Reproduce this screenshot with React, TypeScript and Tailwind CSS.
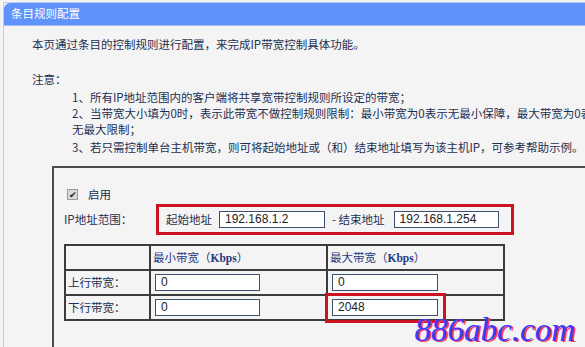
import React from "react";

const cjk = { fontFamily: '"SimSun", "Noto Sans CJK SC", sans-serif' };

const Field = ({ value, className }: { value: string; className?: string }) => (
    <div
        className={`h-[17px] border border-[#3f4f6e] bg-white pl-[5px] text-[12px] leading-[15px] text-[#222] ${className ?? ""}`}
        style={{ fontFamily: '"Liberation Sans", Arial, sans-serif' }}
    >
        {value}
    </div>
);

const App = () => {
    return (
        <div className="relative h-[347px] w-[585px] overflow-hidden bg-[#f4f4f4] pl-[3px] pt-[2px]" style={cjk}>
            <div className="h-full border-l border-t border-l-[#e6c98d] border-t-[#b3cdf3]">
                {/* title bar */}
                <div className="flex h-[23px] items-center rounded-tl-[6px] border-b border-b-[#a6bfe9] bg-[#5f93fb] pl-[7px] text-[11.5px] text-white">
                    条目规则配置
                </div>

                <div className="pl-[28px] pt-[10px] text-[11.5px] leading-[16px] text-[#1e2f52]">
                    <p>本页通过条目的控制规则进行配置，来完成IP带宽控制具体功能。</p>
                    <p className="mt-[19px]">注意：</p>
                    <div className="mt-[2px] pl-[40px] whitespace-nowrap">
                        <p>1、所有IP地址范围内的客户端将共享宽带控制规则所设定的带宽；</p>
                        <p>2、当带宽大小填为0时，表示此带宽不做控制规则限制：最小带宽为0表示无最小保障，最大带宽为0表示</p>
                        <p>无最大限制；</p>
                        <p className="mt-[2px]">3、若只需控制单台主机带宽，则可将起始地址或（和）结束地址填写为该主机IP，可参考帮助示例。</p>
                    </div>
                </div>

                {/* rule box */}
                <div className="ml-[48px] mt-[11px] h-[200px] border-l-2 border-t-2 border-[#4a4a4a] pl-[10px] pt-[18px] text-[11.5px] text-[#1e2f52]">
                    <div className="flex items-center gap-[10px] pl-[3px]">
                        <span className="flex h-[11px] w-[11px] items-center justify-center border border-[#9a9a9a] bg-[#d9d9d9] text-[9px] leading-none text-[#222]">
                            ✔
                        </span>
                        <span>启用</span>
                    </div>

                    <div className="mt-[1px] flex items-center">
                        <span className="w-[92px]">IP地址范围：</span>
                        <div className="flex h-[31px] w-[358px] items-center border-[3px] border-[#cc1420] pl-[7px]">
                            <span>起始地址</span>
                            <Field value="192.168.1.2" className="ml-[7px] w-[106px]" />
                            <span className="ml-[7px]">- 结束地址</span>
                            <Field value="192.168.1.254" className="ml-[9px] w-[105px]" />
                        </div>
                    </div>

                    <table className="mt-[9px] border-collapse text-[11.5px]">
                        <tbody>
                            <tr className="h-[25px]">
                                <td className="w-[85px] border-2 border-[#3c3c3c]" />
                                <td className="w-[177px] border-2 border-[#3c3c3c] pl-[2px] text-[#1f3a80]">
                                    最小带宽（<span className="font-bold" style={{ fontFamily: '"Liberation Serif", serif' }}>Kbps</span>）
                                </td>
                                <td className="w-[177px] border-2 border-[#3c3c3c] pl-[2px] text-[#1f3a80]">
                                    最大带宽（<span className="font-bold" style={{ fontFamily: '"Liberation Serif", serif' }}>Kbps</span>）
                                </td>
                            </tr>
                            <tr className="h-[25px]">
                                <td className="border-2 border-[#3c3c3c] pl-[2px]">上行带宽：</td>
                                <td className="border-2 border-[#3c3c3c] pl-[4px]">
                                    <Field value="0" className="w-[105px]" />
                                </td>
                                <td className="border-2 border-[#3c3c3c] pl-[4px]">
                                    <Field value="0" className="w-[106px]" />
                                </td>
                            </tr>
                            <tr className="h-[25px]">
                                <td className="border-2 border-[#3c3c3c] pl-[2px]">下行带宽：</td>
                                <td className="border-2 border-[#3c3c3c] pl-[4px]">
                                    <Field value="0" className="w-[105px]" />
                                </td>
                                <td className="relative border-2 border-[#3c3c3c] pl-[4px]">
                                    <Field value="2048" className="w-[106px]" />
                                    <div className="absolute -left-[3px] -top-[3px] h-[30px] w-[121px] border-[3px] border-[#cc1420]" />
                                </td>
                            </tr>
                        </tbody>
                    </table>
                </div>
            </div>

            {/* watermark */}
            <div
                className="absolute bottom-[0px] right-[10px] text-[33px] italic leading-[34px] text-[#3a3cff]"
                style={{ fontFamily: '"Liberation Serif", serif', textShadow: "2px 1px 0 #ff3a5a" }}
            >
                886abc.com
            </div>
        </div>
    );
};

export default App;
